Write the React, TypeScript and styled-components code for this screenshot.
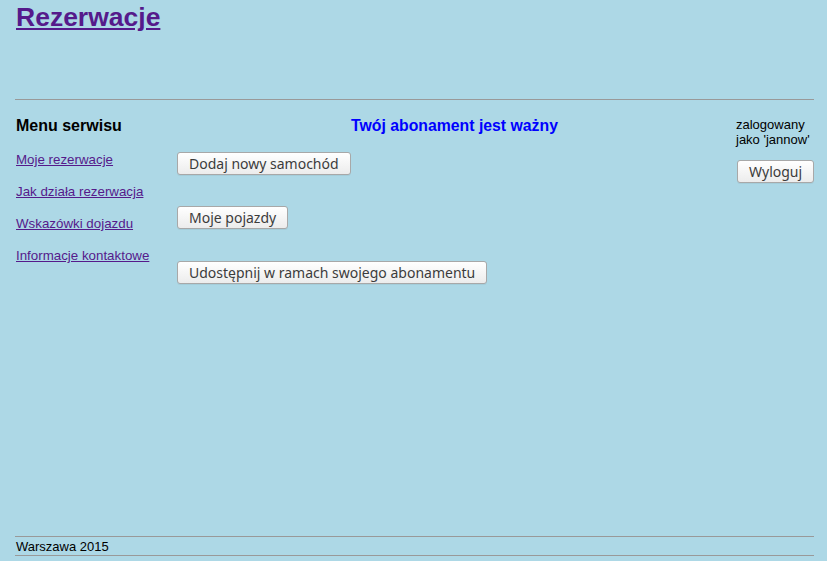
import React from "react";
import styled, { createGlobalStyle } from "styled-components";

const Global = createGlobalStyle`
  html, body { margin: 0; padding: 0; background: #add8e6; }
  body { font-family: "Liberation Sans", Arial, sans-serif; color: #000; }
`;

const Page = styled.div`
  min-height: 561px;
  box-sizing: border-box;
  padding: 0 13px 0 15px;
  display: flex;
  flex-direction: column;
`;

const Header = styled.header`
  height: 99px;
  border-bottom: 1px solid #999;
  padding-left: 1px;
`;

const Title = styled.a`
  display: inline-block;
  margin-top: 2px;
  font-size: 26.5px;
  font-weight: bold;
  color: #551a8b;
  text-decoration: underline;
  line-height: 30px;
`;

const Main = styled.main`
  flex: 1;
  display: grid;
  grid-template-columns: 162px 1fr 78px;
  padding-top: 17px;
`;

const Sidebar = styled.nav`
  padding-left: 1px;
  display: flex;
  flex-direction: column;
`;

const SideTitle = styled.h3`
  margin: 0 0 17px 0;
  font-size: 16px;
  font-weight: bold;
  line-height: 18px;
`;

const SideLink = styled.a`
  font-size: 13.33px;
  color: #551a8b;
  text-decoration: underline;
  line-height: 15px;
  margin-bottom: 17px;
  align-self: flex-start;
`;

const Content = styled.section`
  display: flex;
  flex-direction: column;
  align-items: flex-start;
`;

const Status = styled.h3`
  align-self: stretch;
  text-align: center;
  margin: 0 0 17px 0;
  padding-right: 4px;
  font-size: 15.8px;
  line-height: 18px;
  color: #0000ff;
  font-weight: bold;
`;

const Button = styled.button<{ $gap?: number }>`
  font-family: "Noto Sans", "DejaVu Sans", sans-serif;
  font-size: 14px;
  color: #3c3c3c;
  height: 23px;
  padding: 0 11px;
  border: 1px solid #a8a8a8;
  border-radius: 3px;
  background: linear-gradient(#ffffff, #ececec);
  box-shadow: 0 1px 0 rgba(0, 0, 0, 0.05);
  line-height: 20px;
  cursor: pointer;
  margin-bottom: ${(p) => p.$gap ?? 0}px;
`;

const Aside = styled.aside`
  display: flex;
  flex-direction: column;
  align-items: flex-start;
  font-size: 13px;
  line-height: 15px;
`;

const UserText = styled.div`
  margin-bottom: 13px;
`;

const LogoutButton = styled(Button)`
  margin-left: 1px;
`;

const Footer = styled.footer`
  border-top: 1px solid #999;
  border-bottom: 1px solid #999;
  padding: 3px 1px 2px;
  font-size: 13px;
  line-height: 13px;
  margin-bottom: 5px;
`;

export default function App() {
  return (
    <>
      <Global />
      <Page>
        <Header>
          <Title href="#">Rezerwacje</Title>
        </Header>
        <Main>
          <Sidebar>
            <SideTitle>Menu serwisu</SideTitle>
            <SideLink href="#">Moje rezerwacje</SideLink>
            <SideLink href="#">Jak działa rezerwacja</SideLink>
            <SideLink href="#">Wskazówki dojazdu</SideLink>
            <SideLink href="#">Informacje kontaktowe</SideLink>
          </Sidebar>
          <Content>
            <Status>Twój abonament jest ważny</Status>
            <Button $gap={31}>Dodaj nowy samochód</Button>
            <Button $gap={32}>Moje pojazdy</Button>
            <Button>Udostępnij w ramach swojego abonamentu</Button>
          </Content>
          <Aside>
            <UserText>
              zalogowany
              <br />
              jako 'jannow'
            </UserText>
            <LogoutButton>Wyloguj</LogoutButton>
          </Aside>
        </Main>
        <Footer>Warszawa 2015</Footer>
      </Page>
    </>
  );
}
